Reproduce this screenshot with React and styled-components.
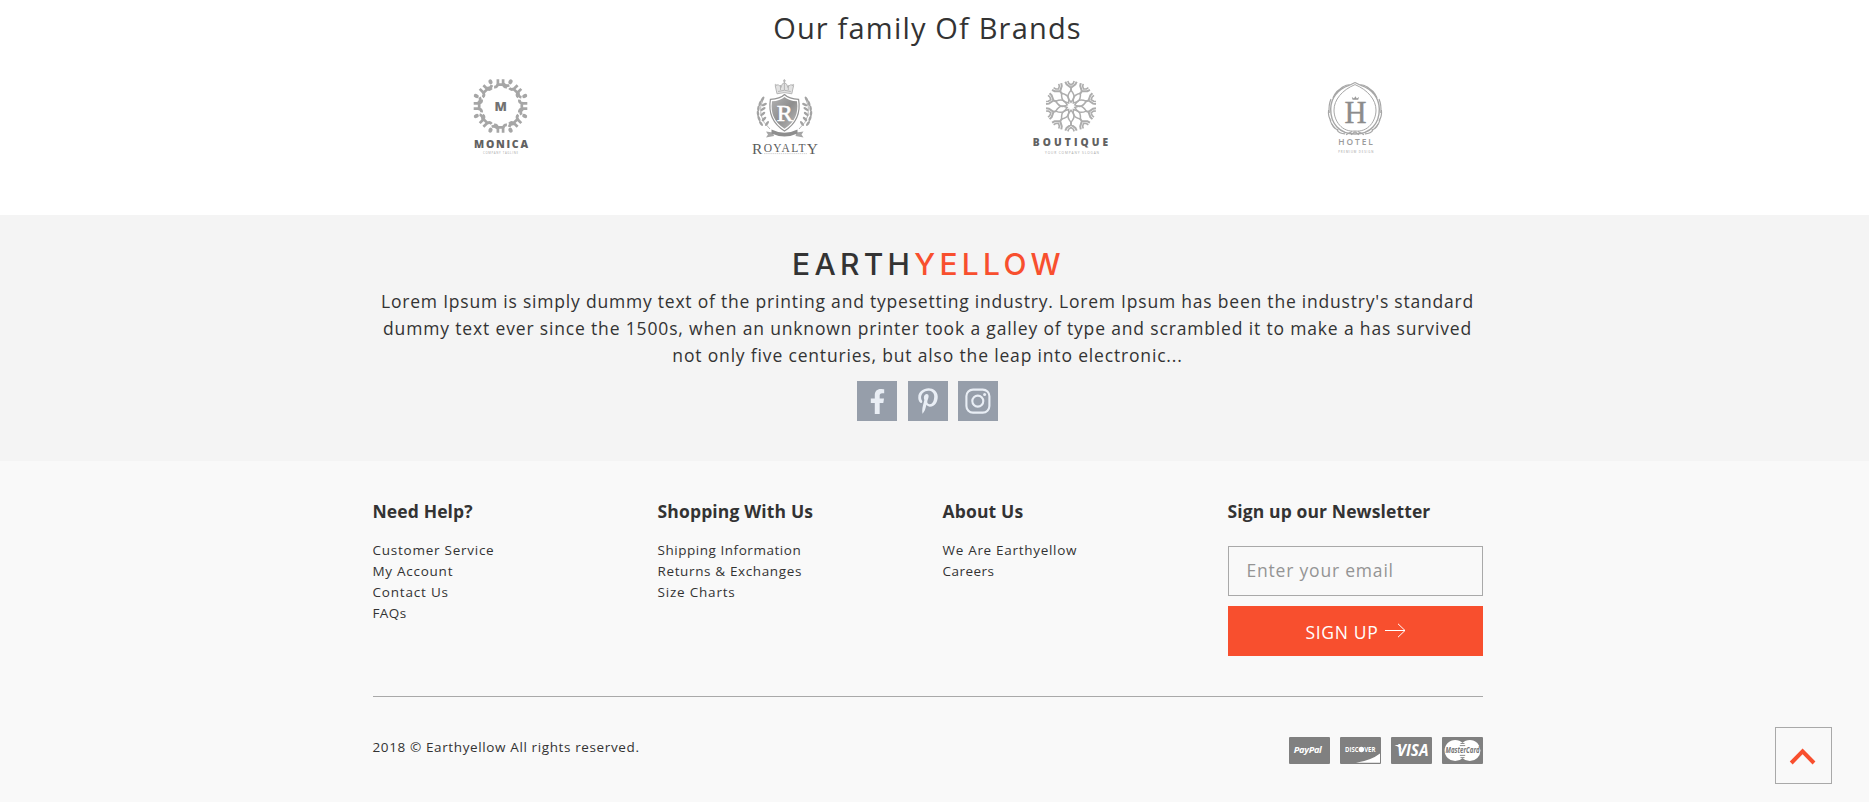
import React from "react";
import styled, { createGlobalStyle } from "styled-components";
import { FaFacebookF, FaPinterestP } from "react-icons/fa";

const GlobalStyle = createGlobalStyle`
  *, *::before, *::after { box-sizing: border-box; }
  body {
    margin: 0;
    background: #f9f9f9;
    color: #333;
    font-family: "Open Sans", "Noto Sans", sans-serif;
  }
`;

const Container = styled.div`
  width: 1110px;
  margin: 0 auto;
`;

const Brands = styled.section`
  height: 215px;
  padding: 10px 14px 0 0;
  background: #fff;
`;

const BrandsTitle = styled.h2`
  margin: 0;
  font-size: 29px;
  font-weight: 400;
  line-height: 36px;
  letter-spacing: 1.18px;
  text-align: center;
`;

const BrandRow = styled.div`
  display: grid;
  grid-template-columns: repeat(4, 285px);
  justify-content: center;
  justify-items: center;
  padding-top: 24px;
`;

const BrandMark = styled.svg`
  display: block;
  width: 100px;
  height: 95px;
`;

const Intro = styled.section`
  height: 246px;
  padding: 29px 14px 0 0;
  background: #f4f4f4;
  text-align: center;
`;

const Wordmark = styled.div`
  padding-left: 2px;
  font-family: Inter, sans-serif;
  font-size: 30px;
  font-weight: 500;
  line-height: 40px;
  letter-spacing: 4.3px;
`;

const Accent = styled.span`
  color: #f84f2e;
`;

const Blurb = styled.p`
  margin: 4px 0 12px;
  font-size: 17.5px;
  line-height: 27px;
`;

const BlurbLine = styled.span`
  display: block;
  letter-spacing: ${(p) => p.$track}px;
  white-space: nowrap;
`;

const Socials = styled.div`
  display: flex;
  justify-content: center;
  gap: 10.5px;
`;

const SocialLink = styled.a`
  display: flex;
  align-items: center;
  justify-content: center;
  width: 40px;
  height: 40px;
  background: #969eaa;
  color: #e9eef5;
`;

const Footer = styled.footer`
  padding: 37px 14px 0 0;
  background: #f9f9f9;
`;

const Columns = styled.div`
  display: grid;
  grid-template-columns: 285px 285px 285px 255px;
  height: 198px;
`;

const ColumnTitle = styled.h3`
  margin: 0;
  font-size: 17.5px;
  font-weight: 700;
  line-height: 27px;
  letter-spacing: ${(p) => p.$track}px;
  white-space: nowrap;
`;

const LinkList = styled.ul`
  margin: 15px 0 0;
  padding: 0;
  list-style: none;
`;

const LinkItem = styled.li`
  font-size: 13.5px;
  line-height: 21px;
  letter-spacing: ${(p) => p.$track}px;
`;

const Form = styled.form`
  display: flex;
  flex-direction: column;
  gap: 10px;
  padding-top: 21px;
`;

const EmailInput = styled.input`
  width: 255px;
  height: 50px;
  padding: 0 18px 2px;
  border: 1px solid #a9a9a9;
  border-radius: 0;
  background: transparent;
  color: #333;
  font: 400 17.5px "Open Sans", sans-serif;
  letter-spacing: 0.8px;
  &::placeholder { color: #949494; opacity: 1; }
`;

const SubmitButton = styled.button`
  display: flex;
  align-items: center;
  justify-content: center;
  gap: 6px;
  width: 255px;
  height: 50px;
  padding: 1px 0 0 1px;
  border: 0;
  background: #f84f2e;
  color: #fff;
  font: 400 17.5px/28px "Open Sans", sans-serif;
  letter-spacing: 0.7px;
`;

const ArrowIcon = styled.svg`
  display: block;
  margin-bottom: 2px;
`;

const Bottom = styled.div`
  display: flex;
  justify-content: space-between;
  height: 106px;
  padding-top: 40px;
  border-top: 1px solid #a9a9a9;
`;

const Copyright = styled.span`
  font-size: 13.5px;
  line-height: 21px;
  letter-spacing: 0.62px;
`;

const Cards = styled.div`
  display: flex;
  gap: 10px;
`;

const Card = styled.svg`
  display: block;
  width: 41px;
  height: 27px;
  border-radius: 1px;
  background: #808080;
`;

const BackToTop = styled.a`
  position: fixed;
  right: 37px;
  bottom: 18px;
  width: 57px;
  height: 57px;
  border: 1px solid #a9a9a9;
  svg { display: block; }
`;

const turns = (n) => Array.from({ length: n }, (_, i) => (i * 360) / n);

const SANS = '"Open Sans", sans-serif';
const SERIF = '"Liberation Serif", serif';

function Monica() {
  return (
    <BrandMark viewBox="0 0 100 95">
      <g transform="translate(50.5 36)" fill="none" stroke="#a6a6a6" strokeWidth="2.7">
        {turns(8).map((a) => (
          <g key={a} transform={`rotate(${a})`}>
            <path d="M-2.6 -26.8 V-22.4 M2.6 -26.8 V-22.4 M-2.6 -22.4 Q-3 -18.6 -6.4 -18.8 M2.6 -22.4 Q3 -18.6 6.4 -18.8 M-3.5 -21.3 H3.5" />
            <path d="M3 -22.5 Q5.5 -19 8.7 -20.9" />
            <ellipse cx="0" cy="-26.2" rx="2" ry="2.6" transform="rotate(22.5)" fill="#a6a6a6" stroke="none" />
          </g>
        ))}
      </g>
      <text x="50.6" y="40.8" textAnchor="middle" fontFamily={SANS} fontSize="12.8" fontWeight="800" fill="#727272">M</text>
      <text x="24" y="78.4" textLength="54" fontFamily={SANS} fontSize="10.5" fontWeight="800" fill="#626262">MONICA</text>
      <text x="33" y="83.8" textLength="35" fontFamily={SANS} fontSize="2.8" fill="#a5a5a5">COMPANY TAGLINE</text>
    </BrandMark>
  );
}

const leaves = [
  [26, 53.5, -35], [24, 48.5, -22], [23, 43.5, -8], [23.4, 38.5, 6], [25, 33.5, 18], [27.5, 29.2, 32],
  [32, 53.5, 35], [29, 49, 45], [27.8, 44, 52], [28, 39, 58], [29.2, 34.6, 66],
];

function Laurel() {
  return (
    <g fill="#a3a3a3">
      <path d="M35 59 Q20 46 28.5 28" fill="none" stroke="#a3a3a3" strokeWidth="0.8" />
      {leaves.map(([x, y, r]) => (
        <ellipse key={`${x}-${y}`} cx={x} cy={y} rx="1.25" ry="2.9" transform={`rotate(${r} ${x} ${y})`} />
      ))}
    </g>
  );
}

function Royalty() {
  return (
    <BrandMark viewBox="0 0 100 95">
      <defs>
        <linearGradient id="shield" x1="0" y1="0" x2="1" y2="1">
          <stop offset="0" stopColor="#b2b2b2" />
          <stop offset="0.5" stopColor="#8e8e8e" />
          <stop offset="1" stopColor="#bcbcbc" />
        </linearGradient>
      </defs>
      <g fill="none" stroke="#b0b0b0" strokeWidth="0.9">
        <path d="M42 23.8 L40.3 16 Q43.5 13 46 17.5 Q46.5 13.5 49.4 12.6 Q52.3 13.5 52.8 17.5 Q55.3 13 58.5 16 L56.8 23.8 Q49.4 21.3 42 23.8Z" fill="#e2e2e2" />
        <path d="M43 21.5 Q49.4 19 55.8 21.5 M49.4 9.5 V20 M45.5 20 V15 M53.3 20 V15" />
        <circle cx="49.4" cy="10.8" r="0.9" />
        <circle cx="40.6" cy="15" r="0.6" />
        <circle cx="58.2" cy="15" r="0.6" />
      </g>
      <Laurel />
      <g transform="translate(99 0) scale(-1 1)"><Laurel /></g>
      <path d="M49.5 24.5 Q54 29 63.6 29.4 Q67 50 49.5 61 Q32 50 35.4 29.4 Q45 29 49.5 24.5Z" fill="#fff" stroke="#959595" strokeWidth="1.2" />
      <path d="M49.5 27 Q54 31 62 31.3 Q64.6 49.5 49.5 58.7 Q34.4 49.5 37 31.3 Q45 31 49.5 27Z" fill="url(#shield)" />
      <text x="49.8" y="51" textAnchor="middle" fontFamily={SERIF} fontSize="24" fill="#fff" stroke="#fff" strokeWidth="0.6">R</text>
      <path d="M31 61.5 L38 62.5 L39 66 L31 67.5 L33 64.5Z M68.5 61.5 L61.5 62.5 L60.5 66 L68.5 67.5 L66.5 64.5Z" fill="#a6a6a6" />
      <path d="M36.5 59.5 Q49.5 66 62.5 59.5 L62.5 63.5 Q49.5 69.5 36.5 63.5Z" fill="#8e8e8e" />
      <text x="17" y="84" textLength="66" fontFamily={SERIF} fontSize="11.5" fill="#5c5c5c">
        <tspan fontSize="15.5">R</tspan><tspan dy="-2">OYALT</tspan><tspan dy="2" fontSize="15.5">Y</tspan>
      </text>
      <path d="M29 83.6 H72" stroke="#c8c8c8" strokeWidth="0.7" strokeDasharray="1.6 0.5" />
    </BrandMark>
  );
}

function Boutique() {
  return (
    <BrandMark viewBox="0 0 100 95">
      <g transform="translate(51 36.2)" fill="none" stroke="#adadad">
        {turns(10).map((a) => (
          <g key={a} transform={`rotate(${a})`}>
            <path d="M0 -15 V-19.5 M0 -18.4 L-4.4 -21.8 L-5.7 -24.4 M0 -18.4 L4.4 -21.8 L5.7 -24.4" strokeWidth="2" />
            <path d="M-3.2 -25.2 L-2.3 -23 L0 -21.2 L2.3 -23 L3.2 -25.2" strokeWidth="1.6" />
            <path d="M0 -16 Q-4.3 -11 -2.6 -7.4 L0 -4 L2.6 -7.4 Q4.3 -11 0 -16" strokeWidth="1.5" />
          </g>
        ))}
      </g>
      <text x="12.7" y="75.9" textLength="75.5" fontFamily={SANS} fontSize="10.2" fontWeight="800" fill="#626262">BOUTIQUE</text>
      <text x="25" y="83.6" textLength="54" fontFamily={SANS} fontSize="3.2" fill="#a8a8a8">YOUR COMPANY SLOGAN</text>
    </BrandMark>
  );
}

function HotelBranch() {
  return (
    <g fill="none" stroke="#a6a6a6">
      <path d="M50 64 C34 64 25.5 53 25.7 39 C25.8 28 33 19 44 15.3" strokeWidth="1.4" />
      <path d="M50 61 C37 62.5 29 51 29 40 C29 30 37 20 50 14.6" strokeWidth="1" />
      <path d="M24.2 43 Q23.4 35 26 29 M26 51 Q22.8 46 23.6 40 M30 58 Q25.5 54 24.8 48 M28 28 Q31 20 38 17.5 M31 24 Q36 15 46 14.5 M44 15.5 L50 12.5" strokeWidth="1.2" />
      <path d="M33.5 60 Q29 59 27 54 M40 63.8 Q34 63.5 32 60 M41 64.8 L47 61.5 M46 64.8 L50 61.8" strokeWidth="1.2" />
    </g>
  );
}

function Hotel() {
  return (
    <BrandMark viewBox="0 0 100 95">
      <HotelBranch />
      <g transform="translate(100 0) scale(-1 1)"><HotelBranch /></g>
      <path d="M47.6 29.8 L46.8 27 L49 28.4 L50.4 26.2 L51.8 28.4 L54 27 L53.2 29.8Z" fill="#999" />
      <text x="50.4" y="52.6" textAnchor="middle" fontFamily={SERIF} fontSize="30.5" fill="#8c8c8c" stroke="#8c8c8c" strokeWidth="0.4">H</text>
      <text x="33.3" y="75.1" textLength="34.6" fontFamily={SANS} fontSize="8.4" fontWeight="600" fill="#9b9b9b">HOTEL</text>
      <text x="33.3" y="83.4" textLength="35" fontFamily={SANS} fontSize="2.8" fill="#9d9d9d">PREMIUM DESIGN</text>
    </BrandMark>
  );
}

function InstagramIcon() {
  return (
    <svg width="26" height="26" viewBox="0 0 26 26" fill="none" stroke="currentColor">
      <rect x="1.4" y="1.6" width="23" height="23" rx="6.6" strokeWidth="2.1" />
      <circle cx="12.8" cy="13.1" r="5.5" strokeWidth="2.1" />
      <circle cx="19.6" cy="6.4" r="1.5" fill="currentColor" stroke="none" />
    </svg>
  );
}

const columns = [
  { title: "Need Help?", track: 0.12, links: [["Customer Service", 0.75], ["My Account", 0.73], ["Contact Us", 0.8], ["FAQs", 0.4]] },
  { title: "Shopping With Us", track: 0.15, links: [["Shipping Information", 0.54], ["Returns & Exchanges", 0.63], ["Size Charts", 0.8]] },
  { title: "About Us", track: 0.15, links: [["We Are Earthyellow", 0.7], ["Careers", 0.48]] },
];

export default function App() {
  return (
    <>
      <GlobalStyle />
      <Brands>
        <BrandsTitle>Our family Of Brands</BrandsTitle>
        <BrandRow>
          <Monica />
          <Royalty />
          <Boutique />
          <Hotel />
        </BrandRow>
      </Brands>

      <Intro>
        <Wordmark>EARTH<Accent>YELLOW</Accent></Wordmark>
        <Blurb>
          <BlurbLine $track={0.79}>Lorem Ipsum is simply dummy text of the printing and typesetting industry. Lorem Ipsum has been the industry's standard</BlurbLine>
          <BlurbLine $track={0.84}>dummy text ever since the 1500s, when an unknown printer took a galley of type and scrambled it to make a has survived</BlurbLine>
          <BlurbLine $track={0.83}>not only five centuries, but also the leap into electronic...</BlurbLine>
        </Blurb>
        <Socials>
          <SocialLink><FaFacebookF size={25} /></SocialLink>
          <SocialLink><FaPinterestP size={26} /></SocialLink>
          <SocialLink><InstagramIcon /></SocialLink>
        </Socials>
      </Intro>

      <Footer>
        <Container>
          <Columns>
            {columns.map((c) => (
              <div key={c.title}>
                <ColumnTitle $track={c.track}>{c.title}</ColumnTitle>
                <LinkList>
                  {c.links.map(([label, track]) => (
                    <LinkItem key={label} $track={track}>{label}</LinkItem>
                  ))}
                </LinkList>
              </div>
            ))}
            <div>
              <ColumnTitle $track={0.12}>Sign up our Newsletter</ColumnTitle>
              <Form>
                <EmailInput type="email" placeholder="Enter your email" />
                <SubmitButton type="button">
                  SIGN UP
                  <ArrowIcon width="21" height="16" viewBox="0 0 21 16" fill="none" stroke="#fff" strokeWidth="1">
                    <path d="M0 7.5 H20 M13 0.8 L20 7.5 L13 14.2" />
                  </ArrowIcon>
                </SubmitButton>
              </Form>
            </div>
          </Columns>
          <Bottom>
            <Copyright>2018 © Earthyellow All rights reserved.</Copyright>
            <Cards>
              <Card viewBox="0 0 41 27">
                <text x="4.8" y="16.2" textLength="28" fontFamily={SANS} fontSize="9.2" fontWeight="700" fontStyle="italic" fill="#fff">PayPal</text>
              </Card>
              <Card viewBox="0 0 41 27">
                <path d="M16 25.8 Q31 23.5 40 16.5 V25.8Z" fill="#fff" />
                <text x="5" y="15.1" textLength="13.5" lengthAdjust="spacingAndGlyphs" fontFamily={SANS} fontSize="7" fontWeight="700" fill="#fff">DISC</text>
                <circle cx="21.4" cy="12.5" r="2.7" fill="#fff" />
                <text x="24.2" y="15.1" textLength="11.3" lengthAdjust="spacingAndGlyphs" fontFamily={SANS} fontSize="7" fontWeight="700" fill="#fff">VER</text>
              </Card>
              <Card viewBox="0 0 41 27">
                <text x="6" y="19" textLength="31.5" lengthAdjust="spacingAndGlyphs" fontFamily={SANS} fontSize="15.4" fontWeight="700" fontStyle="italic" fill="#fff">VISA</text>
                <path d="M3.5 8 H9 L11 13 Q8 9.5 3.5 8Z" fill="#fff" />
              </Card>
              <Card viewBox="0 0 41 27">
                <circle cx="13.2" cy="13.5" r="10.6" fill="#fff" />
                <circle cx="27.8" cy="13.5" r="10.6" fill="#fff" />
                <path d="M18.5 6.5 H22.5 M17.8 8.6 H23.2 M17.8 18.4 H23.2 M18.5 20.6 H22.5" stroke="#808080" strokeWidth="0.9" />
                <text x="3.6" y="16.3" textLength="34" lengthAdjust="spacingAndGlyphs" fontFamily={SANS} fontSize="8" fontWeight="700" fontStyle="italic" fill="#757575">MasterCard</text>
              </Card>
            </Cards>
          </Bottom>
        </Container>
      </Footer>

      <BackToTop>
        <svg width="55" height="55" viewBox="0 0 55 55" fill="none" stroke="#f84f2e" strokeWidth="4">
          <path d="M15.2 35 L26.6 23.4 L38 35" />
        </svg>
      </BackToTop>
    </>
  );
}
